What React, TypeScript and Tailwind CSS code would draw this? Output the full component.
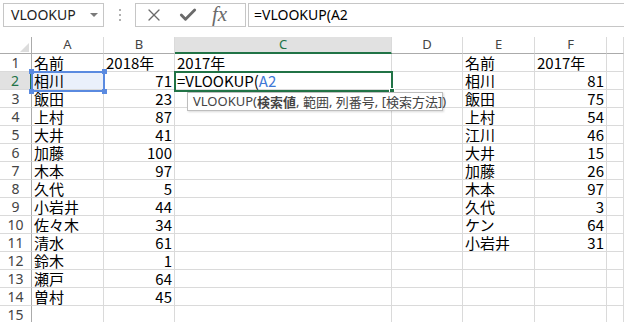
import { X, Check } from 'lucide-react';

const cellFont = { fontFamily: '"Noto Sans CJK JP", "Noto Sans", sans-serif' };
const uiFont = { fontFamily: '"Noto Sans", "Open Sans", sans-serif' };

const leftData: [string, string][] = [
  ['名前', '2018年'],
  ['相川', '71'],
  ['飯田', '23'],
  ['上村', '87'],
  ['大井', '41'],
  ['加藤', '100'],
  ['木本', '97'],
  ['久代', '5'],
  ['小岩井', '44'],
  ['佐々木', '34'],
  ['清水', '61'],
  ['鈴木', '1'],
  ['瀬戸', '64'],
  ['曽村', '45'],
];

const rightData: [string, string][] = [
  ['名前', '2017年'],
  ['相川', '81'],
  ['飯田', '75'],
  ['上村', '54'],
  ['江川', '46'],
  ['大井', '15'],
  ['加藤', '26'],
  ['木本', '97'],
  ['久代', '3'],
  ['ケン', '64'],
  ['小岩井', '31'],
];

const colLetters = ['A', 'B', 'C', 'D', 'E', 'F', ''];

function Cell({ children, right, className = '' }: { children?: React.ReactNode; right?: boolean; className?: string }) {
  return (
    <div
      className={`h-[18px] border-r border-b border-[#dadada] flex items-end px-[2px] text-[15px] leading-[17px] text-black whitespace-nowrap overflow-visible ${right ? 'justify-end' : 'justify-start'} ${className}`}
      style={cellFont}
    >
      {children}
    </div>
  );
}

export default function App() {
  const rows = Array.from({ length: 15 }, (_, i) => i);

  return (
    <div className="w-[624px] h-[322px] bg-white overflow-hidden relative select-none">
      {/* formula bar */}
      <div className="flex items-center h-[30px] pt-[3px] pb-[3px] pl-[3px]">
        <div className="w-[101px] h-[24px] border border-[#c6c6c6] flex items-center justify-between pl-[7px] pr-[5px]">
          <span className="text-[14px] text-[#222] leading-none" style={uiFont}>VLOOKUP</span>
          <span className="w-0 h-0 border-l-[4px] border-r-[4px] border-t-[4px] border-l-transparent border-r-transparent border-t-[#7a7a7a]" />
        </div>
        <div className="w-[31px] flex flex-col items-center gap-[3px]">
          <span className="w-[2px] h-[2px] bg-[#b0b0b0]" />
          <span className="w-[2px] h-[2px] bg-[#b0b0b0]" />
          <span className="w-[2px] h-[2px] bg-[#b0b0b0]" />
        </div>
        <div className="w-[111px] h-[24px] border border-[#c6c6c6] flex items-center pl-[8px] gap-[14px]">
          <X size={20} strokeWidth={1.6} className="text-[#6a6a6a]" />
          <Check size={20} strokeWidth={3.4} className="text-[#6a6a6a]" />
          <span className="text-[21px] italic text-[#6a6a6a] leading-none -mt-[2px]" style={{ fontFamily: '"Liberation Serif", serif' }}>fx</span>
        </div>
        <div className="ml-[2px] flex-1 h-[24px] border border-[#c6c6c6] border-r-0 flex items-center pl-[5px]">
          <span className="text-[14px] text-black leading-none" style={uiFont}>=VLOOKUP(A2</span>
        </div>
      </div>

      {/* sheet */}
      <div className="relative mt-[7px]">
        <div className="grid grid-cols-[32px_72px_71px_217px_71px_72px_72px_1fr]">
          {/* header row */}
          <div className="h-[17px] border-r border-b border-[#ababab] relative">
            <svg className="absolute left-[20px] top-[6px]" width="9" height="9" viewBox="0 0 9 9">
              <polygon points="9,0 9,9 0,9" fill="#dcdcdc" />
            </svg>
          </div>
          {colLetters.map((c, i) =>
            c === 'C' ? (
              <div key={i} className="h-[17px] bg-[#e1e1e1] border-r border-[#dadada] border-b-2 border-b-[#217346] flex items-center justify-center text-[13px] text-[#217346]" style={uiFont}>
                {c}
              </div>
            ) : (
              <div key={i} className="h-[17px] border-r border-[#dadada] border-b border-b-[#ababab] flex items-center justify-center text-[13px] text-[#444]" style={uiFont}>
                {c}
              </div>
            )
          )}

          {rows.map((i) => {
            const l = leftData[i];
            const r = rightData[i];
            const active = i === 1;
            return [
              <div
                key={`h${i}`}
                className={`h-[18px] border-b border-[#dadada] flex items-center justify-center text-[14px] ${active ? 'bg-[#e1e1e1] text-[#217346] border-r-2 border-r-[#217346]' : 'text-[#444] border-r border-r-[#ababab]'}`}
                style={uiFont}
              >
                {i + 1}
              </div>,
              <Cell key={`a${i}`} className={active ? 'bg-[#eaf0fb]' : ''}>{l?.[0]}</Cell>,
              <Cell key={`b${i}`} right={i > 0}>{l?.[1]}</Cell>,
              <Cell key={`c${i}`}>
                {i === 0 && '2017年'}
                {i === 1 && (
                  <span>
                    =VLOOKUP(<span className="text-[#3f78d6]">A2</span>
                  </span>
                )}
              </Cell>,
              <Cell key={`d${i}`} />,
              <Cell key={`e${i}`}>{r?.[0]}</Cell>,
              <Cell key={`f${i}`} right={i > 0}>{r?.[1]}</Cell>,
              <Cell key={`g${i}`} />,
            ];
          })}
        </div>

        {/* referenced range A2 */}
        <div className="absolute left-[31px] top-[34px] w-[74px] h-[21px] border-2 border-[#5a8ae0] pointer-events-none" />
        <span className="absolute left-[29px] top-[32px] w-[5px] h-[5px] bg-[#5a8ae0]" />
        <span className="absolute left-[102px] top-[32px] w-[5px] h-[5px] bg-[#5a8ae0]" />
        <span className="absolute left-[29px] top-[52px] w-[5px] h-[5px] bg-[#5a8ae0]" />
        <span className="absolute left-[102px] top-[52px] w-[5px] h-[5px] bg-[#5a8ae0]" />

        {/* active cell C2 */}
        <div className="absolute left-[174px] top-[34px] w-[219px] h-[21px] border-2 border-[#217346] pointer-events-none" />
        <span className="absolute left-[389px] top-[51px] w-[6px] h-[6px] bg-[#217346] border border-white" />

        {/* function tooltip */}
        <div
          className="absolute left-[187px] top-[55px] w-[256px] h-[19px] pl-[5px] bg-white border border-[#bebebe] shadow-[1px_1px_2px_rgba(0,0,0,0.15)] flex items-center text-[13px] leading-none text-[#444] whitespace-nowrap"
          style={cellFont}
        >
          <span style={uiFont}>VLOOKUP(</span>
          <span className="font-bold">検索値</span>
          <span style={uiFont}>,&nbsp;</span>範囲<span style={uiFont}>,&nbsp;</span>列番号<span style={uiFont}>, [</span>検索方法<span style={uiFont}>])</span>
        </div>
      </div>
    </div>
  );
}
